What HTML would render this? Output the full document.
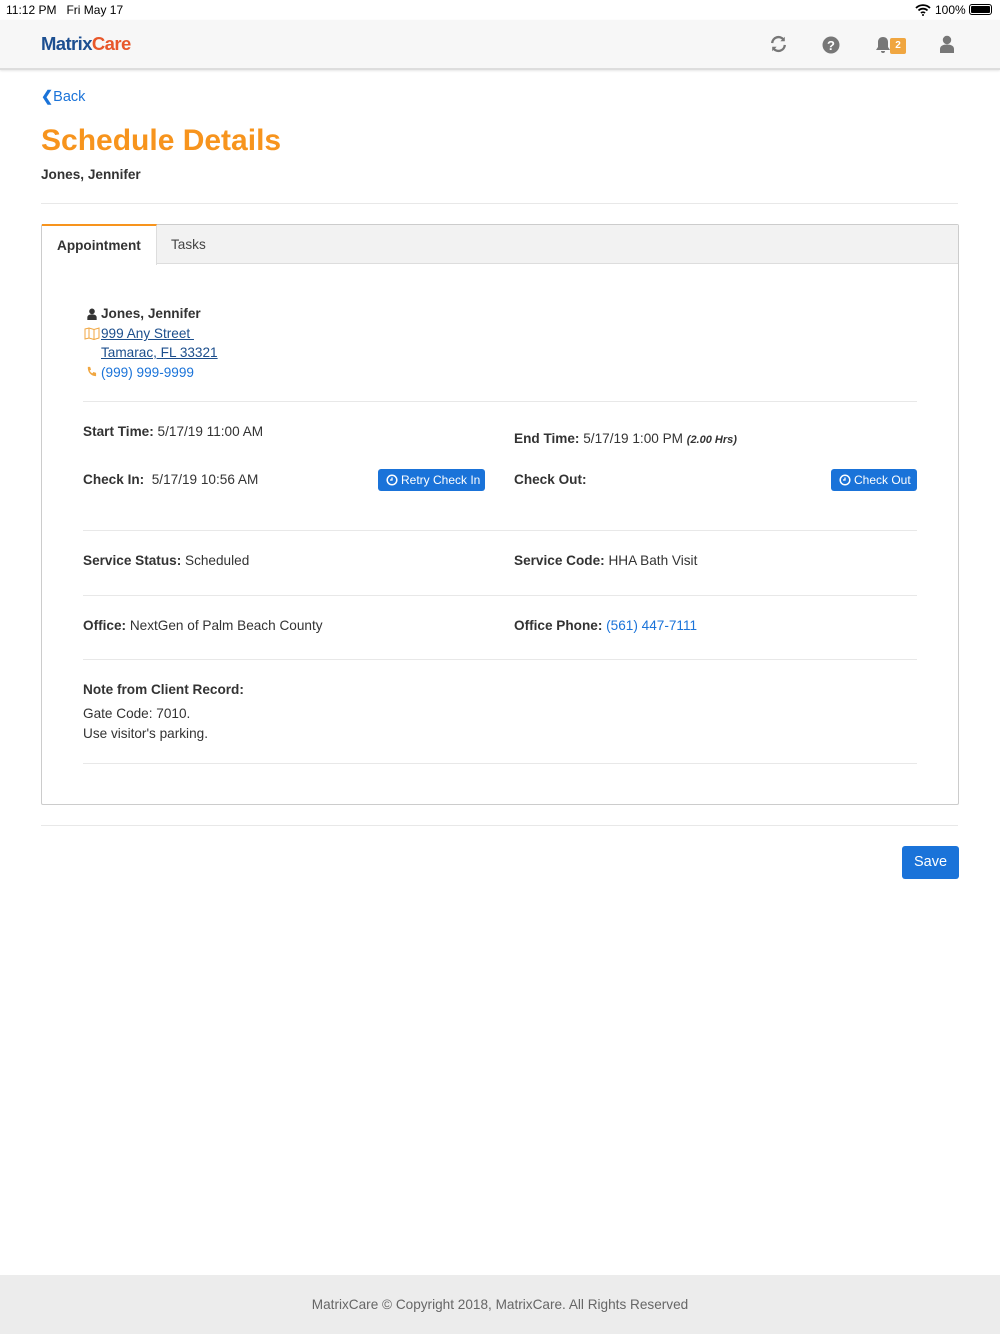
<!DOCTYPE html>
<html><head><meta charset="utf-8"><style>
*{margin:0;padding:0;box-sizing:border-box}
body{width:1000px;height:1334px;position:relative;background:#fff;font-family:"Liberation Sans",Arial,sans-serif;color:#333;overflow:hidden}
.abs{position:absolute}
.status{top:0;left:0;width:1000px;height:20px;font-size:12px;color:#000}
.nav{top:20px;left:0;width:1000px;height:50px;background:#f7f7f7;border-bottom:2px solid #ddd;box-shadow:0 1px 2px rgba(0,0,0,.1)}
.lbl{font-weight:bold}
.t{font-size:13.6px;white-space:nowrap}
a{color:#1a73d9;text-decoration:none}
.ul{color:#1c4e8c;text-decoration:underline}
.hr{height:1px;background:#e8e8e8}
.btn{background:#1a73d9;color:#fff;border-radius:3px;font-size:12px;height:22px;line-height:22px;padding-left:23px;white-space:nowrap}
</style></head><body>
<div class="abs status"><span class="abs" style="left:6px;top:3px">11:12 PM&nbsp;&nbsp;&nbsp;Fri May 17</span>
<span class="abs" style="left:935px;top:3px">100%</span>
<svg class="abs" style="left:915px;top:4px" width="16" height="12" viewBox="0 0 16 12"><path d="M1 4a10 10 0 0 1 14 0M3.5 6.5a6.5 6.5 0 0 1 9 0M6 9a3 3 0 0 1 4 0" stroke="#000" stroke-width="1.8" fill="none"/><circle cx="8" cy="11" r="1" fill="#000"/></svg>
<div class="abs" style="left:969px;top:4px;width:23px;height:11px;border:1px solid #000;border-radius:3px;padding:1px"><div style="background:#000;width:100%;height:100%;border-radius:1px"></div></div>
</div>
<div class="abs nav">
<div class="abs" style="left:41px;top:13px;font-size:18.5px;font-weight:bold;letter-spacing:-0.6px"><span style="color:#1d4f91">Matrix</span><span style="color:#e8572a">Care</span></div>
<svg class="abs" style="left:769px;top:15px" width="19" height="18" viewBox="0 0 20 20"><path d="M3 9a7 7 0 0 1 12.5-4M17 11a7 7 0 0 1-12.5 4" stroke="#777" stroke-width="2.6" fill="none"/><path d="M17 2v5h-5zM3 18v-5h5z" fill="#777"/></svg>
<svg class="abs" style="left:822px;top:16px" width="18" height="18"><circle cx="9" cy="9" r="8.5" fill="#777"/><text x="9" y="14" font-size="13" font-weight="bold" fill="#fff" text-anchor="middle" font-family="Liberation Sans">?</text></svg>
<svg class="abs" style="left:875px;top:16px" width="16" height="18" viewBox="0 0 16 18"><path d="M8 1c-3 0-5 2-5 5v5l-2 3h14l-2-3V6c0-3-2-5-5-5zM6 15a2 2 0 0 0 4 0z" fill="#777"/></svg>
<div class="abs" style="left:890px;top:18px;width:16px;height:16px;background:#f0a640;color:#fff;font-size:10px;font-weight:bold;text-align:center;line-height:16px;border-radius:2px">2</div>
<svg class="abs" style="left:939px;top:15px" width="16" height="18" viewBox="0 0 16 18"><circle cx="8" cy="5" r="4.2" fill="#777"/><path d="M1 18v-4c0-3 3-4.5 7-4.5s7 1.5 7 4.5v4z" fill="#777"/></svg>
</div>
<div class="abs" style="left:41px;top:89px;font-size:14.5px;color:#1a73d9"><span style="font-weight:bold">&#10094;</span>Back</div>
<div class="abs" style="left:41px;top:124px;font-size:30px;font-weight:bold;color:#f7941d">Schedule Details</div>
<div class="abs t lbl" style="left:41px;top:167px">Jones, Jennifer</div>
<div class="abs hr" style="left:41px;top:203px;width:917px"></div>
<div class="abs" style="left:41px;top:224px;width:918px;height:581px;border:1px solid #ccc;border-radius:2px">
<div class="abs" style="left:0;top:0;width:916px;height:39px;background:#f2f2f2;border-bottom:1px solid #ddd"></div>
<div class="abs" style="left:0;top:-1px;width:115px;height:41px;background:#fff;border-top:2px solid #f7941d;border-right:1px solid #ddd;font-size:13.6px;font-weight:bold;padding:12px 0 0 15px">Appointment</div>
<div class="abs t" style="left:129px;top:12px;color:#444">Tasks</div>
</div>
<svg class="abs" style="left:86px;top:308px" width="12" height="12" viewBox="0 0 16 18"><circle cx="8" cy="5" r="4.2" fill="#333"/><path d="M1 18v-4c0-3 3-4.5 7-4.5s7 1.5 7 4.5v4z" fill="#333"/></svg>
<div class="abs t lbl" style="left:101px;top:306px">Jones, Jennifer</div>
<svg class="abs" style="left:84px;top:327px" width="16" height="13" viewBox="0 0 16 13"><path d="M1 2l4-1 5 1.5 5-1.5v10l-5 1.5-5-1.5-4 1zM5 1v10M10 2.5v10" stroke="#f0a640" fill="none"/></svg>
<div class="abs t ul" style="left:101px;top:326px">999 Any Street&nbsp;</div>
<div class="abs t ul" style="left:101px;top:345px">Tamarac, FL 33321</div>
<svg class="abs" style="left:86px;top:366px" width="11" height="11" viewBox="0 0 12 12"><path d="M2 1l2.5 0 1 3-1.5 1c.6 1.3 1.7 2.4 3 3l1-1.5 3 1V11c-5 .5-9.5-4-9-10z" fill="#f0a640"/></svg>
<div class="abs t" style="left:101px;top:365px;color:#1a73d9">(999) 999-9999</div>
<div class="abs hr" style="left:83px;top:401px;width:834px"></div>
<div class="abs t" style="left:83px;top:424px"><span class="lbl">Start Time:</span> 5/17/19 11:00 AM</div>
<div class="abs t" style="left:514px;top:431px"><span class="lbl">End Time:</span> 5/17/19 1:00 PM <i style="font-weight:bold;font-size:11px">(2.00 Hrs)</i></div>
<div class="abs t" style="left:83px;top:472px"><span class="lbl">Check In:</span>&nbsp; 5/17/19 10:56 AM</div>
<div class="abs btn" style="left:378px;top:469px;width:107px"><svg class="abs" style="left:8px;top:5px" width="12" height="12"><circle cx="6" cy="6" r="4.8" stroke="#fff" stroke-width="1.5" fill="none"/><path d="M6 3.5V6H4" stroke="#fff" stroke-width="1.3" fill="none"/></svg>Retry Check In</div>
<div class="abs t lbl" style="left:514px;top:472px">Check Out:</div>
<div class="abs btn" style="left:831px;top:469px;width:86px"><svg class="abs" style="left:8px;top:5px" width="12" height="12"><circle cx="6" cy="6" r="4.8" stroke="#fff" stroke-width="1.5" fill="none"/><path d="M6 3.5V6H4" stroke="#fff" stroke-width="1.3" fill="none"/></svg>Check Out</div>
<div class="abs hr" style="left:83px;top:530px;width:834px"></div>
<div class="abs t" style="left:83px;top:553px"><span class="lbl">Service Status:</span> Scheduled</div>
<div class="abs t" style="left:514px;top:553px"><span class="lbl">Service Code:</span> HHA Bath Visit</div>
<div class="abs hr" style="left:83px;top:595px;width:834px"></div>
<div class="abs t" style="left:83px;top:618px"><span class="lbl">Office:</span> NextGen of Palm Beach County</div>
<div class="abs t" style="left:514px;top:618px"><span class="lbl">Office Phone:</span> <a>(561) 447-7111</a></div>
<div class="abs hr" style="left:83px;top:659px;width:834px"></div>
<div class="abs t lbl" style="left:83px;top:682px">Note from Client Record:</div>
<div class="abs t" style="left:83px;top:706px">Gate Code: 7010.</div>
<div class="abs t" style="left:83px;top:726px">Use visitor's parking.</div>
<div class="abs hr" style="left:83px;top:763px;width:834px"></div>
<div class="abs hr" style="left:41px;top:825px;width:917px"></div>
<div class="abs" style="left:902px;top:846px;width:57px;height:33px;background:#1a73d9;color:#fff;border-radius:3px;font-size:14.5px;text-align:center;line-height:33px">Save</div>
<div class="abs" style="left:0;top:1275px;width:1000px;height:59px;background:#ececec;text-align:center;font-size:13.6px;color:#666;line-height:60px">MatrixCare © Copyright 2018, MatrixCare. All Rights Reserved</div>
</body></html>
